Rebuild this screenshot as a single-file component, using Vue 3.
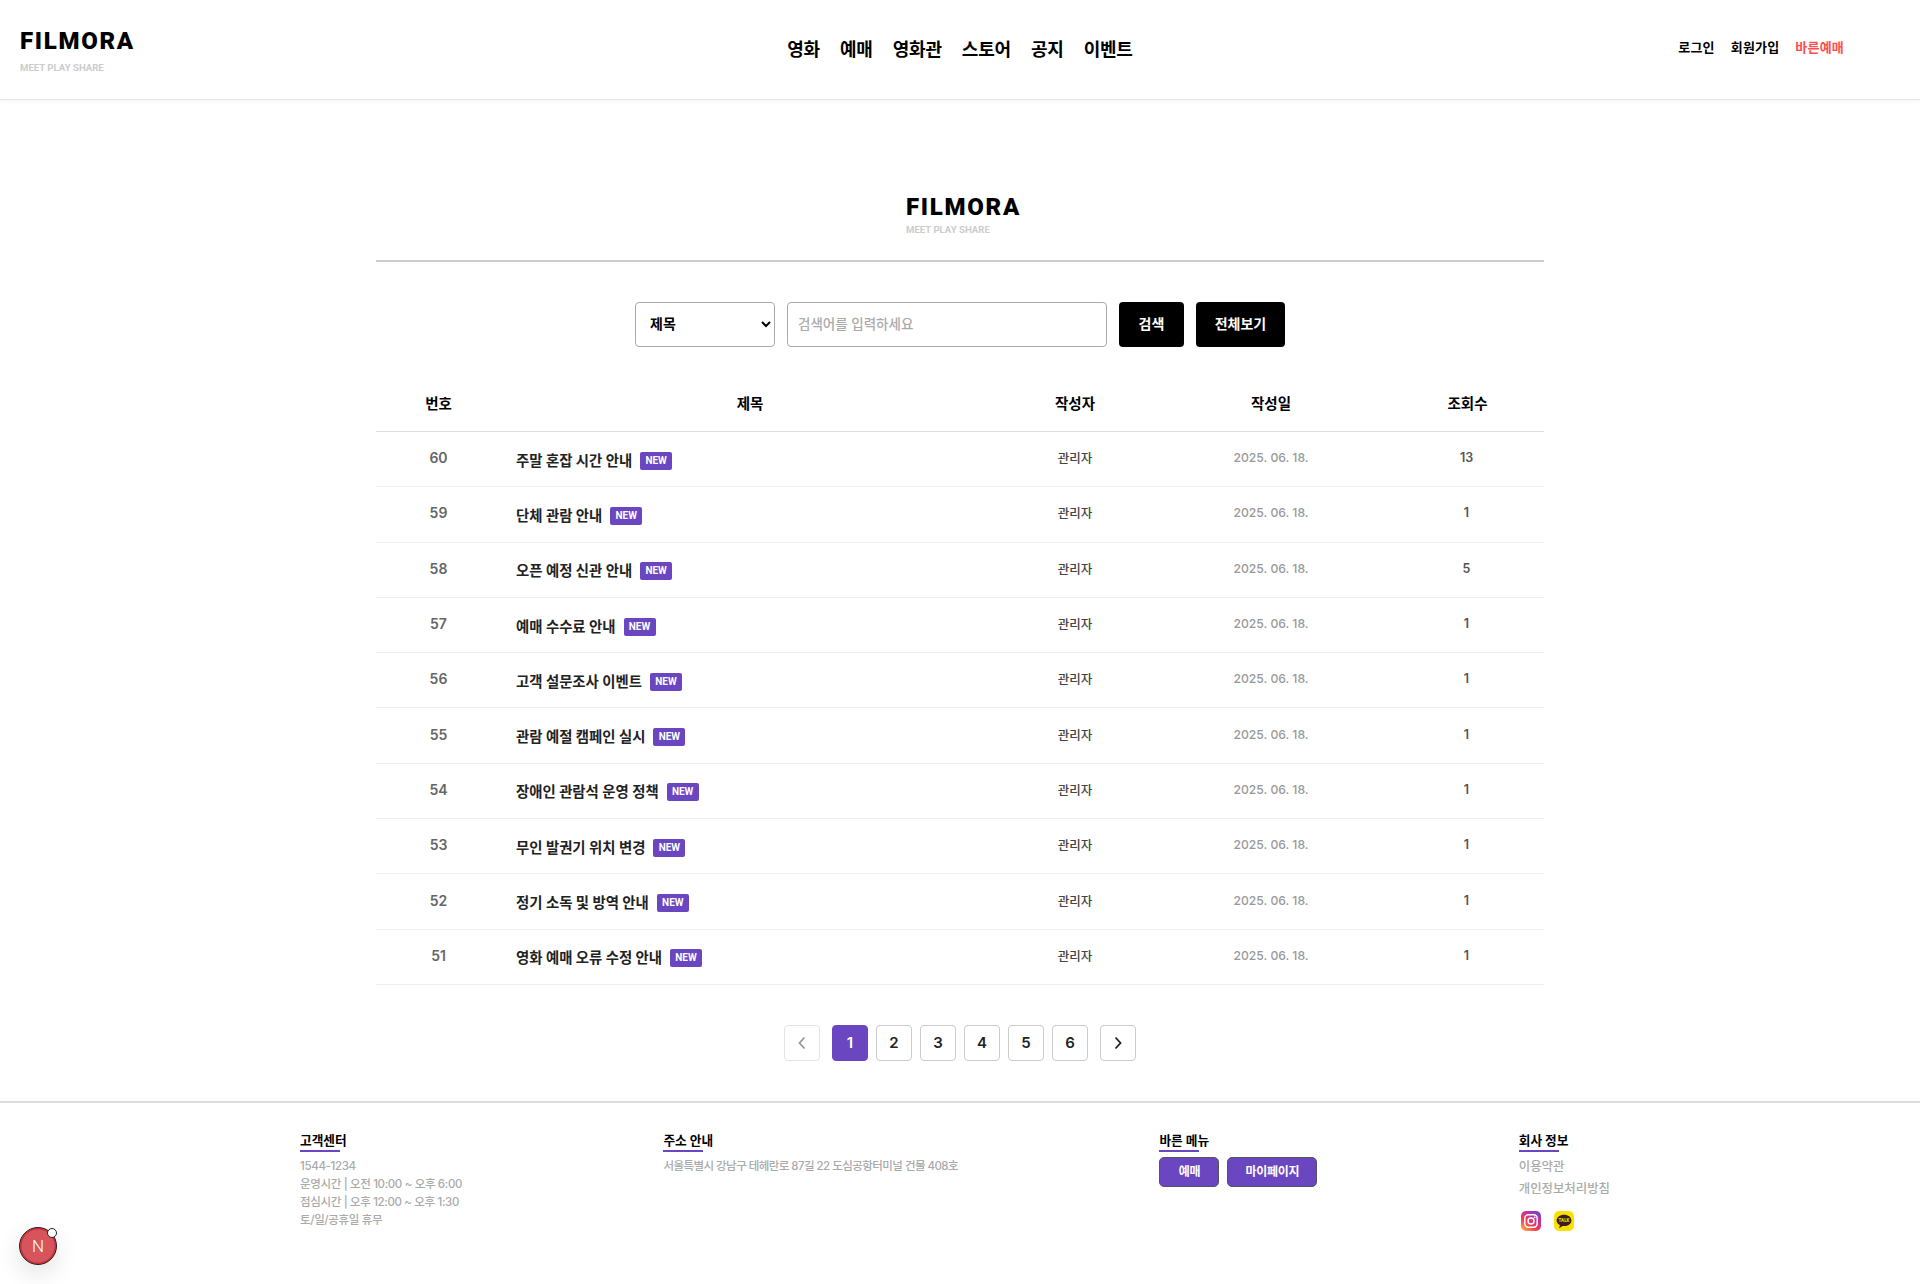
<template>
  <div class="page">
    <header class="site-header">
      <a class="logo">
        <span class="logo-name">FILMORA</span>
        <span class="logo-tag">MEET PLAY SHARE</span>
      </a>
      <nav class="main-nav">
        <a v-for="item in mainNav" :key="item">{{ item }}</a>
      </nav>
      <div class="user-nav">
        <a>로그인</a>
        <a>회원가입</a>
        <a class="quick">바른예매</a>
      </div>
    </header>

    <main class="board">
      <div class="board-title">
        <div class="logo">
          <span class="logo-name">FILMORA</span>
          <span class="logo-tag">MEET PLAY SHARE</span>
        </div>
      </div>

      <form class="search" @submit.prevent>
        <select class="search-select">
          <option>제목</option>
          <option>내용</option>
        </select>
        <input class="search-input" type="text" placeholder="검색어를 입력하세요" />
        <button class="btn-black btn-search">검색</button>
        <button class="btn-black btn-all">전체보기</button>
      </form>

      <table class="notice-table">
        <colgroup>
          <col class="c-no" />
          <col class="c-title" />
          <col class="c-author" />
          <col class="c-date" />
          <col />
        </colgroup>
        <thead>
          <tr>
            <th>번호</th>
            <th>제목</th>
            <th>작성자</th>
            <th>작성일</th>
            <th>조회수</th>
          </tr>
        </thead>
        <tbody>
          <tr v-for="row in rows" :key="row.no">
            <td class="td-no">{{ row.no }}</td>
            <td class="td-title">
              <span>{{ row.title }}</span>
              <em class="badge-new">NEW</em>
            </td>
            <td class="td-author">관리자</td>
            <td class="td-date">2025. 06. 18.</td>
            <td class="td-views">{{ row.views }}</td>
          </tr>
        </tbody>
      </table>

      <div class="pager">
        <button class="page-btn arrow disabled">
          <svg width="12" height="14" viewBox="0 0 12 14"><path d="M8.5 1.5 3.5 7l5 5.500" fill="none" stroke="currentColor" stroke-width="1.8" /></svg>
        </button>
        <div class="page-nums">
          <button v-for="n in 6" :key="n" class="page-btn" :class="{ active: n === 1 }">{{ n }}</button>
        </div>
        <button class="page-btn arrow">
          <svg width="12" height="14" viewBox="0 0 12 14"><path d="M3.5 1.5 8.5 7l-5 5.500" fill="none" stroke="currentColor" stroke-width="1.8" /></svg>
        </button>
      </div>
    </main>

    <footer class="site-footer">
      <div class="footer-inner">
        <section class="f-col">
          <h4>고객센터</h4>
          <p>1544-1234</p>
          <p>운영시간 | 오전 10:00 ~ 오후 6:00</p>
          <p>점심시간 | 오후 12:00 ~ 오후 1:30</p>
          <p>토/일/공휴일 휴무</p>
        </section>
        <section class="f-col">
          <h4>주소 안내</h4>
          <p class="f-addr">서울특별시 강남구 테헤란로 87길 22 도심공항터미널 건물 408호</p>
        </section>
        <section class="f-col">
          <h4>바른 메뉴</h4>
          <div class="f-buttons">
            <button class="f-btn w-60">예매</button>
            <button class="f-btn w-90">마이페이지</button>
          </div>
        </section>
        <section class="f-col">
          <h4>회사 정보</h4>
          <a class="f-link first">이용약관</a>
          <a class="f-link">개인정보처리방침</a>
          <div class="f-social">
            <svg width="20" height="20" viewBox="0 0 20 20">
              <defs>
                <linearGradient id="ig" x1="0.1" y1="1" x2="0.9" y2="0">
                  <stop offset="0" stop-color="#fdb44a" />
                  <stop offset="0.35" stop-color="#f0404c" />
                  <stop offset="0.7" stop-color="#c32fa4" />
                  <stop offset="1" stop-color="#5a50d8" />
                </linearGradient>
              </defs>
              <rect width="20" height="20" rx="5" fill="url(#ig)" />
              <rect x="3.8" y="3.8" width="12.4" height="12.4" rx="3.6" fill="none" stroke="#fff" stroke-width="1.5" />
              <circle cx="10" cy="10" r="3" fill="none" stroke="#fff" stroke-width="1.5" />
              <circle cx="13.7" cy="6.3" r="0.9" fill="#fff" />
            </svg>
            <svg width="20" height="20" viewBox="0 0 20 20">
              <rect width="20" height="20" rx="5" fill="#fae100" />
              <path d="M10 3.800c-4.200 0-7.400 2.500-7.400 5.600 0 2 1.300 3.700 3.300 4.700l-.7 2.600c-.1.200.2.400.4.300l3-2c.5.100 1 .1 1.400.1 4.200 0 7.400-2.500 7.400-5.700S14.200 3.800 10 3.800z" fill="#3c1e1e" />
              <text x="10" y="11" text-anchor="middle" class="talk">TALK</text>
            </svg>
          </div>
        </section>
      </div>
    </footer>

    <div class="dev-badge">
      <span>N</span>
      <i class="dev-dot"></i>
    </div>
  </div>
</template>

<script setup>
const mainNav = ['영화', '예매', '영화관', '스토어', '공지', '이벤트']

const rows = [
  { no: 60, title: '주말 혼잡 시간 안내', views: 13 },
  { no: 59, title: '단체 관람 안내', views: 1 },
  { no: 58, title: '오픈 예정 신관 안내', views: 5 },
  { no: 57, title: '예매 수수료 안내', views: 1 },
  { no: 56, title: '고객 설문조사 이벤트', views: 1 },
  { no: 55, title: '관람 예절 캠페인 실시', views: 1 },
  { no: 54, title: '장애인 관람석 운영 정책', views: 1 },
  { no: 53, title: '무인 발권기 위치 변경', views: 1 },
  { no: 52, title: '정기 소독 및 방역 안내', views: 1 },
  { no: 51, title: '영화 예매 오류 수정 안내', views: 1 },
]
</script>

<style>
body {
  background: #fff;
}
</style>

<style scoped>
.page {
  position: relative;
  height: 1284px;
  overflow: hidden;
  background: #fff;
  color: #000;
  font-family: Inter, "Noto Sans CJK KR", sans-serif;
}

/* header */
.site-header {
  display: grid;
  grid-template-columns: 1fr auto 1fr;
  align-items: center;
  height: 99px;
  padding: 0 76px 0 20px;
  border-bottom: 1px solid #e4e4e4;
  box-shadow: 0 1px 4px rgba(0, 0, 0, 0.05);
}

.logo {
  display: flex;
  flex-direction: column;
}

.site-header .logo {
  margin-top: 3px;
}

.logo-name {
  font-family: Roboto, sans-serif;
  font-size: 24px;
  line-height: 24px;
  font-weight: 900;
  letter-spacing: 1.7px;
  color: #000;
}

.logo-tag {
  margin-top: 9px;
  font-family: Roboto, sans-serif;
  font-size: 9.6px;
  line-height: 12px;
  font-weight: 700;
  color: #ccc;
}

.main-nav {
  display: flex;
  gap: 20px;
  margin-left: 56px;
  font-size: 18px;
  line-height: 26px;
  font-weight: 700;
  letter-spacing: -0.2px;
}

.user-nav {
  display: flex;
  justify-content: flex-end;
  gap: 16px;
  margin-top: -6px;
  font-size: 13px;
  font-weight: 700;
  letter-spacing: 0.2px;
}

.quick {
  color: #ff4d4f;
}

/* board */
.board {
  width: 1168px;
  margin: 0 auto;
}

.board-title {
  display: flex;
  justify-content: center;
  height: 162px;
  padding: 95px 0 0 7px;
  box-sizing: border-box;
  border-bottom: 2px solid #ccc;
}

.board-title .logo-tag {
  margin-top: 5px;
}

.search {
  display: flex;
  justify-content: center;
  gap: 12px;
  margin-top: 40px;
}

.search-select,
.search-input {
  height: 45px;
  box-sizing: border-box;
  border: 1px solid #aaa;
  border-radius: 4px;
  background: #fff;
  font-family: inherit;
}

.search-select {
  width: 140px;
  padding: 0 10px 2px;
  font-size: 14px;
  font-weight: 700;
  color: #000;
}

.search-input {
  width: 320px;
  padding: 0 10px 2px;
  font-size: 13.5px;
  font-weight: 500;
  outline: none;
}

.search-input::placeholder {
  color: #aaa;
}

.btn-black {
  height: 45px;
  padding: 0 0 3px;
  border: 0;
  border-radius: 4px;
  background: #000;
  color: #fff;
  font-family: inherit;
  font-size: 14px;
  font-weight: 700;
}

.btn-search {
  width: 65px;
}

.btn-all {
  width: 89px;
}

.notice-table {
  width: 100%;
  margin-top: 27px;
  table-layout: fixed;
  border-collapse: collapse;
}

.c-no {
  width: 125px;
}

.c-title {
  width: 498px;
}

.c-author {
  width: 152px;
}

.c-date {
  width: 240px;
}

.notice-table th {
  height: 57px;
  padding: 0;
  border-bottom: 1px solid #ddd;
  font-size: 14.5px;
  font-weight: 700;
}

.notice-table td {
  padding: 0 0 3px;
  border-bottom: 1px solid #eee;
  text-align: center;
}

.notice-table .td-title {
  height: 54.3px;
  padding: 0 0 0 15px;
  text-align: left;
  font-size: 14.4px;
  font-weight: 700;
  color: #222;
}

.td-no {
  font-size: 14px;
  font-weight: 600;
  color: #666;
}

.badge-new {
  display: inline-block;
  width: 32px;
  height: 18px;
  margin-left: 8px;
  border-radius: 2px;
  background: #6b46c1;
  color: #fff;
  font-family: Roboto, sans-serif;
  font-size: 10px;
  font-style: normal;
  font-weight: 700;
  line-height: 18px;
  text-align: center;
  vertical-align: 2px;
}

.td-author {
  font-size: 12.5px;
  font-weight: 500;
  color: #444;
}

.td-date {
  font-size: 12.2px;
  font-weight: 500;
  color: #999;
}

.td-views {
  padding-right: 2px !important;
  font-size: 12.5px;
  font-weight: 600;
  color: #555;
}

.pager {
  display: flex;
  justify-content: center;
  gap: 12px;
  margin-top: 40px;
}

.page-nums {
  display: flex;
  gap: 8px;
}

.page-btn {
  display: flex;
  align-items: center;
  justify-content: center;
  width: 36px;
  height: 36px;
  padding: 0;
  border: 1px solid #ccc;
  border-radius: 4px;
  background: #fff;
  color: #222;
  font-family: inherit;
  font-size: 15px;
  font-weight: 600;
}

.page-btn.active {
  border-color: #6b46c1;
  background: #6b46c1;
  color: #fff;
}

.page-btn.disabled {
  border-color: #e4e4e4;
  color: #999;
}

/* footer */
.site-footer {
  margin-top: 40px;
  border-top: 2px solid #ddd;
}

.footer-inner {
  display: flex;
  justify-content: space-between;
  width: 1320px;
  box-sizing: border-box;
  margin: 0 auto;
  padding: 28px 10px 0 0;
}

.f-col h4 {
  position: relative;
  width: fit-content;
  margin: 0 0 5px;
  padding-bottom: 2px;
  font-size: 12.7px;
  line-height: 19px;
  font-weight: 700;
  color: #000;
}

.f-col h4::after {
  content: "";
  position: absolute;
  left: 0;
  bottom: 0;
  width: 40px;
  height: 2px;
  background: #6b46c1;
}

.f-col p {
  margin: 0;
  font-size: 11.5px;
  line-height: 18px;
  font-weight: 500;
  letter-spacing: -0.35px;
  color: #aaa;
}

.f-col .f-addr {
  letter-spacing: -0.55px;
}

.f-buttons {
  display: flex;
  gap: 8px;
}

.f-btn {
  height: 30px;
  padding: 0 0 2px;
  border: 1px solid #555;
  border-radius: 5px;
  background: #6b46c1;
  color: #fff;
  font-family: inherit;
  font-size: 12px;
  font-weight: 700;
  letter-spacing: -0.3px;
}

.w-60 {
  width: 60px;
}

.w-90 {
  width: 90px;
}

.f-link {
  display: block;
  font-size: 12.4px;
  line-height: 22px;
  font-weight: 500;
  color: #aaa;
}

.f-link.first {
  margin-top: -1px;
}

.f-social {
  display: flex;
  gap: 13px;
  margin-top: 11px;
  padding-left: 2px;
}

.talk {
  font-family: Roboto, sans-serif;
  font-size: 4.5px;
  font-weight: 700;
  fill: #fae100;
}

/* dev indicator */
.dev-badge {
  position: absolute;
  left: 19px;
  top: 1227px;
  display: flex;
  align-items: center;
  justify-content: center;
  width: 38px;
  height: 38px;
  box-sizing: border-box;
  border: 1px solid #222;
  border-radius: 50%;
  background: #d8545c;
  box-shadow: inset 0 0 0 1.5px #cf2f3a, 0 8px 24px rgba(0, 0, 0, 0.12);
  color: #fff;
  font-family: Roboto, sans-serif;
  font-size: 17px;
  font-weight: 300;
}

.dev-dot {
  position: absolute;
  top: 0;
  right: -1px;
  width: 10px;
  height: 10px;
  box-sizing: border-box;
  border: 1px solid #222;
  border-radius: 50%;
  background: #fff;
}
</style>
